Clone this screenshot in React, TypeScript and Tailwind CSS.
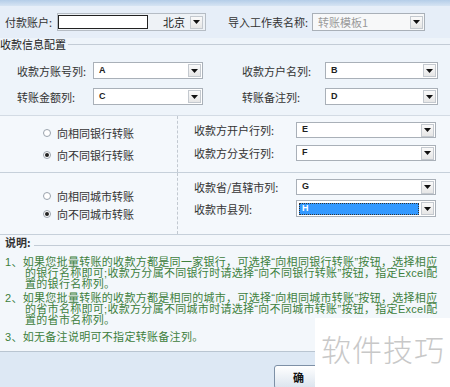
import React from 'react';

const font = "font-['Noto_Sans_CJK_SC',sans-serif]";

const Arrow = () => (
  <span className="flex h-[13px] w-[13px] shrink-0 items-center justify-center border border-[#c4c9cf] bg-gradient-to-b from-[#fafafa] to-[#e6e6e6]">
    <svg width="7" height="4" viewBox="0 0 7 4">
      <path d="M0 0h7L3.5 4z" fill="#111" />
    </svg>
  </span>
);

type ComboProps = {
  value: string;
  className?: string;
  selected?: boolean;
  muted?: boolean;
};

const Combo = ({ value, className = '', selected, muted }: ComboProps) => (
  <div
    className={`flex items-center border border-[#a9b0b8] pl-[2px] pr-[1px] ${
      muted ? 'bg-[#f7f8f9]' : 'bg-white'
    } ${className}`}
  >
    {selected ? (
      <span className="mr-[2px] flex h-[12px] flex-1 items-center border border-dotted border-[#333] bg-[#3399ff] pl-[2px] font-['Liberation_Sans',sans-serif] text-[9px] font-bold text-white">
        {value}
      </span>
    ) : (
      <span
        className={`flex-1 pl-[3px] ${
          muted
            ? 'text-[11px] text-[#9a9a9a]'
            : "font-['Liberation_Sans',sans-serif] text-[9px] font-bold text-[#222]"
        }`}
      >
        {value}
      </span>
    )}
    <Arrow />
  </div>
);

const Radio = ({ label, checked }: { label: string; checked?: boolean }) => (
  <div className="flex items-center">
    <span className="flex h-[8px] w-[8px] items-center justify-center rounded-full border border-[#9aa3ad] bg-white">
      {checked && <span className="h-[4px] w-[4px] rounded-full bg-[#222]" />}
    </span>
    <span className="ml-[6px] text-[11px] leading-[12px] text-[#333]">{label}</span>
  </div>
);

const Field = ({
  label,
  value,
  labelW,
  comboW,
  h = 'h-[17px]',
  selected,
}: {
  label: string;
  value: string;
  labelW: string;
  comboW: string;
  h?: string;
  selected?: boolean;
}) => (
  <div className="flex items-center">
    <span className={`${labelW} text-[11px] leading-[12px] text-[#333]`}>{label}</span>
    <Combo value={value} className={`${comboW} ${h}`} selected={selected} />
  </div>
);

const notes = [
  [
    '1、如果您批量转账的收款方都是同一家银行，可选择“向相同银行转账”按钮，选择相应',
    '的银行名称即可;收款方分属不同银行时请选择“向不同银行转账”按钮，指定Excel配',
    '置的银行名称列。',
  ],
  [
    '2、如果您批量转账的收款方都是相同的城市，可选择“向相同城市转账”按钮，选择相应',
    '的省市名称即可;收款方分属不同城市时请选择“向不同城市转账”按钮，指定Excel配',
    '置的省市名称列。',
  ],
  ['3、如无备注说明可不指定转账备注列。'],
];

export default function App() {
  return (
    <div className={`relative h-[387px] w-[450px] overflow-hidden bg-[#dde8f4] ${font}`}>
      <div className="h-[6px] bg-gradient-to-b from-[#b4cde8] to-[#d6e4f3]" />

      {/* top row */}
      <div className="flex h-[32px] items-center bg-[#e6eef8]">
        <span className="w-[57px] pl-[5px] text-[11px] text-[#333]">付款账户:</span>
        <div className="flex h-[18px] w-[149px] items-center border border-[#b5bcc4] bg-[#eef2f6] pr-[2px]">
          <div className="h-[14px] w-[90px] border border-[#222] bg-white" />
          <span className="ml-[15px] text-[11px] text-[#222]">北京</span>
          <span className="ml-auto">
            <Arrow />
          </span>
        </div>
        <span className="ml-[22px] w-[84px] text-[11px] text-[#333]">导入工作表名称:</span>
        <Combo value="转账模板1" muted className="h-[18px] w-[113px]" />
      </div>

      {/* section 1 */}
      <div className="bg-[#eef4fa] pb-[10px]">
        <div className="flex h-[12px] items-center">
          <span className="text-[11px] leading-[12px] text-[#222]">收款信息配置</span>
          <div className="ml-[2px] h-px flex-1 bg-[#c3ccd6]" />
        </div>
        <div className="mt-[12px] flex flex-col gap-[9px] pl-[17px]">
          <div className="flex">
            <Field label="收款方账号列:" value="A" labelW="w-[76px]" comboW="w-[110px]" />
            <div className="ml-[39px]">
              <Field label="收款方户名列:" value="B" labelW="w-[83px]" comboW="w-[113px]" />
            </div>
          </div>
          <div className="flex">
            <Field label="转账金额列:" value="C" labelW="w-[76px]" comboW="w-[110px]" />
            <div className="ml-[39px]">
              <Field label="转账备注列:" value="D" labelW="w-[83px]" comboW="w-[113px]" />
            </div>
          </div>
        </div>
      </div>

      {/* section 2 */}
      <div className="flex h-[57px] border-t border-[#d3dbe4] bg-[#f4f8fc]">
        <div className="flex w-[178px] flex-col justify-center gap-[10px] border-r border-dashed border-[#c2c9d1] pl-[43px]">
          <Radio label="向相同银行转账" />
          <Radio label="向不同银行转账" checked />
        </div>
        <div className="flex flex-col gap-[7px] pl-[16px] pt-[6px]">
          <Field label="收款方开户行列:" value="E" labelW="w-[102px]" comboW="w-[140px]" h="h-[16px]" />
          <Field label="收款方分支行列:" value="F" labelW="w-[102px]" comboW="w-[140px]" h="h-[16px]" />
        </div>
      </div>

      {/* section 3 */}
      <div className="flex h-[63px] border-b border-t border-[#c6d0da] bg-[#f4f8fc]">
        <div className="flex w-[178px] flex-col gap-[6px] border-r border-dashed border-[#c2c9d1] pl-[43px] pt-[17px]">
          <Radio label="向相同城市转账" />
          <Radio label="向不同城市转账" checked />
        </div>
        <div className="flex flex-col gap-[5px] pl-[16px] pt-[6px]">
          <Field label="收款省/直辖市列:" value="G" labelW="w-[102px]" comboW="w-[140px]" h="h-[16px]" />
          <Field label="收款市县列:" value="H" labelW="w-[102px]" comboW="w-[140px]" h="h-[17px]" selected />
        </div>
      </div>

      {/* notes */}
      <div className="h-[117px] overflow-hidden border-b border-[#b9c5d1] bg-[#f3f7fb]">
        <div className="flex h-[14px] items-center">
          <span className="pl-[5px] text-[11px] font-semibold leading-[12px] text-[#333]">说明:</span>
          <div className="ml-[3px] mt-[6px] h-px flex-1 bg-[#c3ccd6]" />
        </div>
        <div className="mt-[8px] flex flex-col gap-[3px] pl-[5px] font-['Liberation_Sans','Noto_Sans_CJK_SC',sans-serif] text-[11px] leading-[11px] tracking-[0.3px] text-[#3d803d]">
          {notes.map((item, i) => (
            <div key={i} className={i === 2 ? 'mt-[3px]' : ''}>
              {item.map((line, j) => (
                <div key={j} className={`whitespace-nowrap ${j > 0 ? 'pl-[20px]' : ''}`}>
                  {line}
                </div>
              ))}
            </div>
          ))}
        </div>
      </div>

      {/* footer */}
      <div className="flex pl-[274px] pt-[13px]">
        <button className="flex h-[24px] w-[75px] items-center rounded-[3px] border border-[#7d90a6] bg-gradient-to-b from-[#ffffff] to-[#dbe4ee] pl-[18px] text-[11px] font-bold text-[#111]">
          确　定
        </button>
      </div>

      {/* watermark */}
      <div className="absolute bottom-0 right-0 flex h-[69px] w-[135px] items-start bg-white pl-[6px] pt-[13px]">
        <span className="text-[30px] font-light leading-[34px] tracking-[1px] text-[#c8c8c8]">软件技巧</span>
      </div>
    </div>
  );
}
